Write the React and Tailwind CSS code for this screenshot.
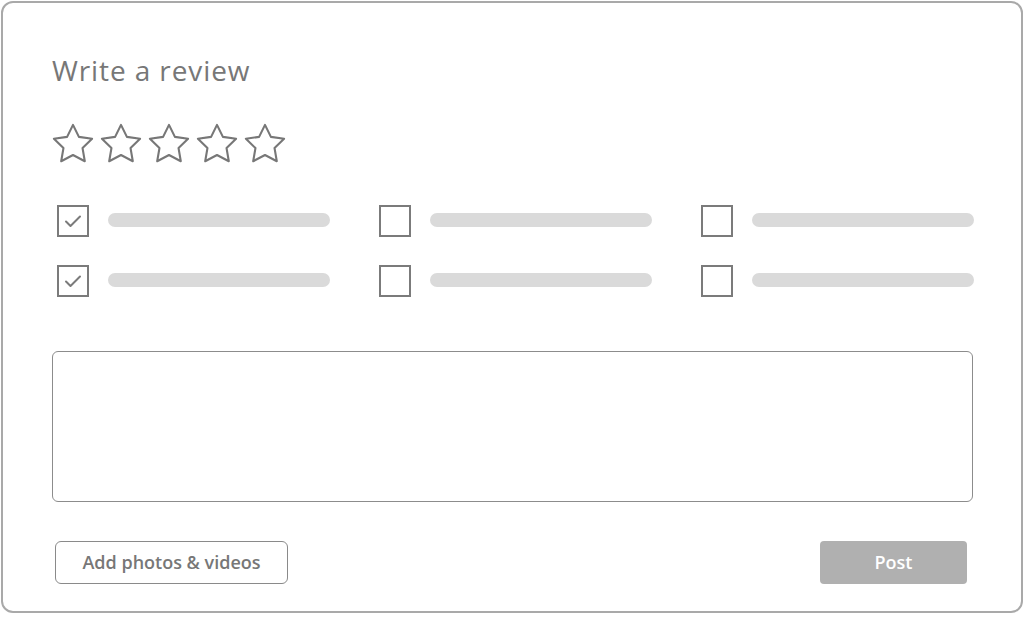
import React from "react";

const Star = () => (
  <svg width="42" height="42" viewBox="1 1 22 22" fill="none">
    <polygon
      points="12,2 15.09,8.26 22,9.27 17,14.14 18.18,21.02 12,17.77 5.82,21.02 7,14.14 2,9.27 8.91,8.26"
      stroke="#777777"
      strokeWidth="1.1"
      strokeLinejoin="round"
    />
  </svg>
);

const Checkbox = ({ checked }) => (
  <div className="w-[32px] h-[32px] border-2 border-[#7b7b7b] flex items-center justify-center shrink-0">
    {checked && (
      <svg width="22" height="22" viewBox="0 0 22 22" fill="none">
        <path d="M4 11.5l4.5 4.5 9.5-9.5" stroke="#7b7b7b" strokeWidth="2" strokeLinecap="round" strokeLinejoin="round" />
      </svg>
    )}
  </div>
);

const Option = ({ checked }) => (
  <div className="flex items-center gap-[19px]">
    <Checkbox checked={checked} />
    <div className="h-[14px] w-[222px] rounded-full bg-[#dadada] mb-[2px]" />
  </div>
);

export default function App() {
  const options = [true, false, false, true, false, false];

  return (
    <div className="w-[1024px] h-[617px] bg-white p-[1px]">
      <div className="w-[1022px] h-[612px] border-2 border-[#a9a9a9] rounded-[12px] bg-white px-[49px] pt-[51px]">
        <h1
          className="text-[28px] leading-[32px] text-[#777777] font-normal tracking-[0.9px]"
          style={{ fontFamily: "'Open Sans', Roboto, sans-serif" }}
        >
          Write a review
        </h1>

        <div className="flex gap-[6px] mt-[37px]">
          {[0, 1, 2, 3, 4].map((i) => (
            <Star key={i} />
          ))}
        </div>

        <div className="grid grid-cols-[273px_273px_273px] gap-x-[49px] gap-y-[28px] mt-[40px] ml-[5px]">
          {options.map((c, i) => (
            <Option key={i} checked={c} />
          ))}
        </div>

        <div className="mt-[54px] h-[151px] w-[921px] border-[1.5px] border-[#8c8c8c] rounded-[6px]" />

        <div
          className="flex justify-between mt-[39px] pl-[3px] pr-[5px]"
          style={{ fontFamily: "'Open Sans', Roboto, sans-serif" }}
        >
          <button className="h-[43px] w-[233px] border border-[#8a8a8a] rounded-[6px] text-[18px] font-semibold text-[#777777]">
            Add photos &amp; videos
          </button>
          <button className="h-[43px] w-[147px] bg-[#b0b0b0] rounded-[4px] text-[18px] font-semibold text-white">
            Post
          </button>
        </div>
      </div>
    </div>
  );
}
